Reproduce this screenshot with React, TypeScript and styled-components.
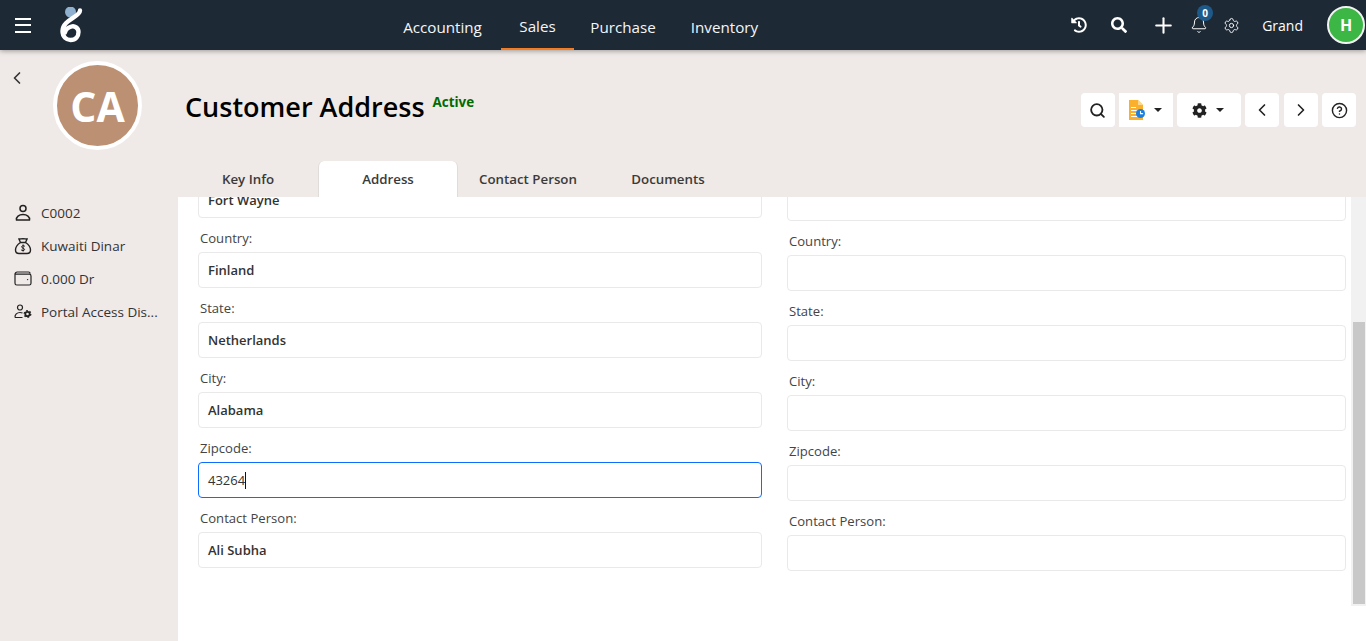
import styled, { createGlobalStyle } from "styled-components";
import { Bell, ChevronLeft, ChevronRight, CircleHelp, Plus, Search, Settings } from "lucide-react";
import { FaCog, FaHistory, FaSearch } from "react-icons/fa";

const GlobalStyle = createGlobalStyle`
  html, body {
    margin: 0;
    padding: 0;
    height: 100%;
    overflow: hidden;
    background: #fff;
    font-family: "Open Sans", "Noto Sans", "Liberation Sans", sans-serif;
  }
  * { box-sizing: border-box; }
`;

const Page = styled.div`
  display: flex;
  flex-direction: column;
  height: 100vh;
`;

const Header = styled.header`
  display: flex;
  align-items: center;
  flex: 0 0 50px;
  background: #1e2936;
  box-shadow: 0 1px 5px rgba(0, 0, 0, 0.35);
  position: relative;
  z-index: 2;
  color: #fff;
`;

const Brand = styled.div`
  display: flex;
  align-items: center;
  width: 384px;
  padding-left: 15px;
  gap: 28px;
`;

const Burger = styled.div`
  display: flex;
  flex-direction: column;
  gap: 4.5px;
  width: 16px;
  span {
    height: 2px;
    background: #fff;
  }
`;

const Nav = styled.nav`
  display: flex;
  height: 50px;
`;

const NavItem = styled.a<{ $active?: boolean; $width: number }>`
  display: flex;
  align-items: center;
  justify-content: center;
  padding-top: ${(p) => (p.$active ? 4 : 6)}px;
  width: ${(p) => p.$width}px;
  font-size: 15.2px;
  color: #f4f6f8;
  border-bottom: 2px solid ${(p) => (p.$active ? "#f47b20" : "transparent")};
`;

const HeaderRight = styled.div`
  display: flex;
  align-items: center;
  margin-left: auto;
  padding-right: 1px;
`;

const HeaderIcon = styled.div<{ $width: number }>`
  display: flex;
  justify-content: center;
  align-items: center;
  position: relative;
  width: ${(p) => p.$width}px;
`;

const Badge = styled.span`
  position: absolute;
  top: -11px;
  left: 10px;
  width: 16px;
  height: 16px;
  border-radius: 50%;
  background: #1d5a8a;
  font-size: 10px;
  font-weight: 700;
  line-height: 16px;
  text-align: center;
  color: #fff;
`;

const UserName = styled.span`
  font-size: 14px;
  padding-top: 1px;
  margin: 0 24px 0 11px;
`;

const UserAvatar = styled.div`
  width: 38px;
  height: 38px;
  border-radius: 50%;
  border: 2px solid #f2f2f2;
  background: #3cb645;
  font-size: 16px;
  font-weight: 700;
  display: flex;
  align-items: center;
  justify-content: center;
`;

const Body = styled.div`
  flex: 1;
  display: flex;
  min-height: 0;
`;

const Sidebar = styled.aside`
  flex: 0 0 178px;
  background: #efe9e7;
  padding: 11px 0 0 11px;
  color: #333;
`;

const BackRow = styled.div`
  height: 0;
  color: #333;
  svg {
    margin: 7px 0 0 -4px;
  }
`;

const CustomerAvatar = styled.div`
  width: 89px;
  height: 89px;
  margin: 0 0 46px 42px;
  border-radius: 50%;
  border: 4px solid #fff;
  background: #bc9072;
  color: #fff;
  font-size: 41px;
  font-weight: 700;
  display: flex;
  align-items: center;
  justify-content: center;
`;

const InfoList = styled.div`
  display: flex;
  flex-direction: column;
  padding-left: 3px;
`;

const InfoRow = styled.div`
  display: flex;
  align-items: center;
  height: 33px;
  gap: 9px;
  font-size: 13.5px;
  white-space: nowrap;
`;

const InfoIcon = styled.span`
  display: flex;
  width: 18px;
  justify-content: center;
  color: #222;
`;

const Main = styled.main`
  flex: 1;
  display: flex;
  flex-direction: column;
  min-width: 0;
`;

const TopPanel = styled.div`
  flex: 0 0 147px;
  display: flex;
  flex-direction: column;
  justify-content: space-between;
  background: #efe9e7;
`;

const TitleRow = styled.div`
  display: flex;
  align-items: flex-start;
  padding: 43px 10px 0 7px;
`;

const Title = styled.h1`
  margin: -1px 8px 0 0;
  font-size: 27px;
  font-weight: 600;
  line-height: 30px;
  color: #000;
`;

const Status = styled.span`
  font-size: 13.4px;
  font-weight: 700;
  color: #006b00;
`;

const Toolbar = styled.div`
  display: flex;
  gap: 4px;
  margin-left: auto;
`;

const ToolButton = styled.button<{ $width?: number; $square?: boolean; $inset?: number }>`
  display: flex;
  align-items: center;
  justify-content: center;
  gap: 9px;
  height: 34px;
  width: ${(p) => p.$width ?? 34}px;
  padding: 0 ${(p) => p.$inset ?? 0}px 0 0;
  border: 0;
  border-radius: ${(p) => (p.$square ? "0" : "4px")};
  background: #fff;
  color: #222;
`;

const NextButton = styled(ToolButton)`
  margin-left: 1px;
`;

const Caret = styled.span`
  width: 0;
  height: 0;
  border-left: 4px solid transparent;
  border-right: 4px solid transparent;
  border-top: 4px solid #222;
`;

const Tabs = styled.div`
  display: flex;
  height: 36px;
`;

const Tab = styled.div<{ $active?: boolean }>`
  width: 140px;
  display: flex;
  align-items: center;
  justify-content: center;
  font-size: 13.3px;
  font-weight: 600;
  color: #3a3a3a;
  background: ${(p) => (p.$active ? "#fff" : "transparent")};
  border-radius: ${(p) => (p.$active ? "6px 6px 0 0" : "0")};
  border: solid ${(p) => (p.$active ? "#e0dcda" : "transparent")};
  border-width: 0 1px;
`;

const FormPane = styled.div`
  position: relative;
  flex: 0 0 409px;
  overflow: hidden;
`;

const ScrollTrack = styled.div`
  position: absolute;
  top: 0;
  right: 0;
  width: 15px;
  height: 100%;
  padding: 125px 1px 2px 2px;
  background: #f1f1f1;
`;

const ScrollThumb = styled.div`
  height: 100%;
  background: #c8c8c8;
`;

const FormGrid = styled.div`
  display: grid;
  grid-template-columns: 564px 559px;
  column-gap: 25px;
  padding-left: 20px;
`;

const FormColumn = styled.div<{ $top: number }>`
  margin-top: ${(p) => p.$top}px;
`;

const FieldLabel = styled.label`
  display: block;
  height: 34px;
  padding: 12px 0 0 2px;
  font-size: 13.1px;
  line-height: 17px;
  color: #444;
`;

const FieldBox = styled.div<{ $focused?: boolean }>`
  display: flex;
  align-items: center;
  height: 36px;
  padding: 0 9px;
  border: 1px solid ${(p) => (p.$focused ? "#0d6efd" : "#e9e9e9")};
  border-radius: 4px;
  font-size: 13px;
  font-weight: ${(p) => (p.$focused ? 400 : 600)};
  color: #333;
`;

const Cursor = styled.span`
  width: 1px;
  height: 17px;
  background: #111;
`;

const PersonIcon = () => (
  <svg width="18" height="18" viewBox="0 0 18 18" fill="none" stroke="currentColor" strokeWidth="1.5" strokeLinejoin="round">
    <circle cx="9" cy="4.500" r="3" />
    <path d="M2.500 16c-.6-3.200 2.500-5.500 6.500-5.500s7.100 2.300 6.500 5.500z" />
  </svg>
);

const BagIcon = () => (
  <svg width="18" height="18" viewBox="0 0 18 18" fill="none" stroke="currentColor" strokeWidth="1.4" strokeLinejoin="round" strokeLinecap="round">
    <path d="M6.500 5.500 4.800 1.800c1.400.7 2.800-.4 4.200 0 1.400-.4 2.800.7 4.200 0L11.500 5.500z" />
    <path d="M6.500 5.500C3.500 7.500 1.500 10.500 1.500 13c0 2.400 1.500 3.500 3.500 3.500h8c2 0 3.500-1.100 3.500-3.500 0-2.500-2-5.500-5-7.500" />
    <path d="M10.800 9.200c-.5-.7-2.900-.9-3.200.5-.3 1.600 3.200 1.300 3 3-.2 1.300-2.800 1.100-3.400.3M9.100 7.800v6.400" strokeWidth="1" />
  </svg>
);

const WalletIcon = () => (
  <svg width="18" height="15" viewBox="0 0 18 15" fill="none" stroke="currentColor" strokeWidth="1.2">
    <path d="M1 3.200C1 2 2 1 3.200 1h11.300c1 0 1.600.6 1.600 1.600M1 3.200v9c0 1 .8 1.800 1.800 1.800h12.400c1 0 1.800-.8 1.800-1.800V5c0-1-.8-1.800-1.800-1.800H1z" />
    <circle cx="13.600" cy="8.600" r=".7" fill="currentColor" stroke="none" />
  </svg>
);

const PortalIcon = () => (
  <svg width="18" height="15" viewBox="0 0 18 15" fill="none" stroke="currentColor" strokeWidth="1.2" strokeLinejoin="round">
    <circle cx="6" cy="3.500" r="2.500" />
    <path d="M1 13.500c-.3-3 2-5 5-5 1 0 1.800.2 2.500.6M1 13.500h7.500" />
    <circle cx="13.500" cy="10" r="2.200" strokeWidth="1.800" />
    <circle cx="13.500" cy="10" r="3.300" strokeWidth="1.300" strokeDasharray="1.700 1.750" />
  </svg>
);

const DocIcon = () => (
  <svg width="16" height="20" viewBox="0 0 16 20">
    <path d="M0 0h9l5 5v15H0z" fill="#fbb02d" />
    <path d="M9 0l5 5H9z" fill="#fdd98e" />
    <path d="M2 7.500h5M2 10.500h7M2 13.500h6M2 16.500h7" stroke="#fff" strokeWidth="1.100" />
    <circle cx="11.500" cy="13.500" r="4.500" fill="#1b7fe0" />
    <path d="M11.500 11v2.600h2.600" stroke="#fff" strokeWidth="1.100" fill="none" />
  </svg>
);

const Logo = () => (
  <svg width="24" height="36" viewBox="0 0 24 36" fill="none">
    <circle cx="11.500" cy="5" r="5.500" fill="#8fb0cf" />
    <path d="M21 3.500C21 10 3.500 13 3.500 24c0 6 4 9 8 9 5.500 0 8-4 8-8 0-4-4-6.500-7-5.500-3 1-6 3-6.500 6" stroke="#fff" strokeWidth="4.400" strokeLinecap="round" />
  </svg>
);

const leftFields: [string, string][] = [
  ["Country:", "Finland"],
  ["State:", "Netherlands"],
  ["City:", "Alabama"],
];

const rightLabels = ["Country:", "State:", "City:", "Zipcode:", "Contact Person:"];

const navItems = [
  { label: "Accounting", width: 117 },
  { label: "Sales", width: 73, active: true },
  { label: "Purchase", width: 98 },
  { label: "Inventory", width: 105 },
];

export default function App() {
  return (
    <Page>
      <GlobalStyle />
      <Header>
        <Brand>
          <Burger><span /><span /><span /></Burger>
          <Logo />
        </Brand>
        <Nav>
          {navItems.map((item) => (
            <NavItem key={item.label} $active={item.active} $width={item.width}>{item.label}</NavItem>
          ))}
        </Nav>
        <HeaderRight>
          <HeaderIcon $width={40}><FaHistory size={16} /></HeaderIcon>
          <HeaderIcon $width={40}><FaSearch size={16} /></HeaderIcon>
          <HeaderIcon $width={48}><Plus size={25} strokeWidth={2} /></HeaderIcon>
          <HeaderIcon $width={24}>
            <Bell size={18} strokeWidth={1.3} />
            <Badge>0</Badge>
          </HeaderIcon>
          <HeaderIcon $width={40}><Settings size={17} strokeWidth={1.3} /></HeaderIcon>
          <UserName>Grand</UserName>
          <UserAvatar>H</UserAvatar>
        </HeaderRight>
      </Header>
      <Body>
        <Sidebar>
          <BackRow><ChevronLeft size={20} strokeWidth={2} /></BackRow>
          <CustomerAvatar>CA</CustomerAvatar>
          <InfoList>
            <InfoRow><InfoIcon><PersonIcon /></InfoIcon>C0002</InfoRow>
            <InfoRow><InfoIcon><BagIcon /></InfoIcon>Kuwaiti Dinar</InfoRow>
            <InfoRow><InfoIcon><WalletIcon /></InfoIcon>0.000 Dr</InfoRow>
            <InfoRow><InfoIcon><PortalIcon /></InfoIcon>Portal Access Dis...</InfoRow>
          </InfoList>
        </Sidebar>
        <Main>
          <TopPanel>
            <TitleRow>
              <Title>Customer Address</Title>
              <Status>Active</Status>
              <Toolbar>
                <ToolButton $inset={2}><Search size={17} strokeWidth={2.6} /></ToolButton>
                <ToolButton $width={54} $square $inset={2}><DocIcon /><Caret /></ToolButton>
                <ToolButton $width={64} $inset={3}><FaCog size={15} /><Caret /></ToolButton>
                <ToolButton><ChevronLeft size={20} strokeWidth={2} /></ToolButton>
                <NextButton><ChevronRight size={20} strokeWidth={2} /></NextButton>
                <ToolButton><CircleHelp size={17} strokeWidth={2} /></ToolButton>
              </Toolbar>
            </TitleRow>
            <Tabs>
              <Tab>Key Info</Tab>
              <Tab $active>Address</Tab>
              <Tab>Contact Person</Tab>
              <Tab>Documents</Tab>
            </Tabs>
          </TopPanel>
          <FormPane>
            <FormGrid>
              <FormColumn $top={-15}>
                <FieldBox>Fort Wayne</FieldBox>
                {leftFields.map(([label, value]) => (
                  <div key={label}>
                    <FieldLabel>{label}</FieldLabel>
                    <FieldBox>{value}</FieldBox>
                  </div>
                ))}
                <FieldLabel>Zipcode:</FieldLabel>
                <FieldBox $focused>43264<Cursor /></FieldBox>
                <FieldLabel>Contact Person:</FieldLabel>
                <FieldBox>Ali Subha</FieldBox>
              </FormColumn>
              <FormColumn $top={-12}>
                <FieldBox />
                {rightLabels.map((label) => (
                  <div key={label}>
                    <FieldLabel>{label}</FieldLabel>
                    <FieldBox />
                  </div>
                ))}
              </FormColumn>
            </FormGrid>
            <ScrollTrack><ScrollThumb /></ScrollTrack>
          </FormPane>
        </Main>
      </Body>
    </Page>
  );
}
